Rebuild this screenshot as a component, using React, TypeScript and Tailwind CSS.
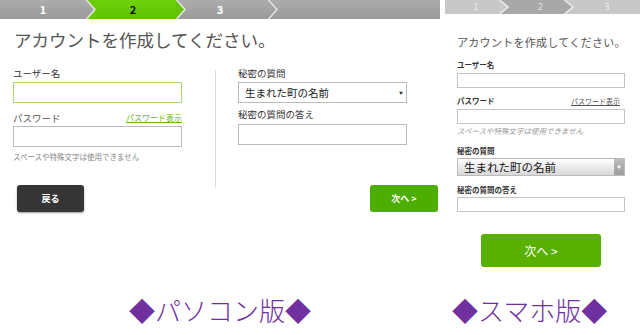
const jp = "font-['Noto_Sans_CJK_JP',sans-serif]";
const label = "font-['Liberation_Serif','Noto_Sans_CJK_JP',serif] font-light";

function Chevron({ fillLeft, fillRight, h, line }: { fillLeft?: string; fillRight?: string; h: number; line: string }) {
  const m = h / 2;
  return (
    <svg width="10" height={h} viewBox={`0 0 10 ${h}`} className="shrink-0 block">
      {fillLeft && <polygon points={`0,0 9,${m} 0,${h}`} fill={fillLeft} />}
      {fillRight && <polygon points={`0,0 10,0 10,${h} 0,${h} 9,${m}`} fill={fillRight} />}
      <polyline points={`0.5,0 9,${m} 0.5,${h}`} fill="none" stroke={line} strokeWidth="1.5" />
    </svg>
  );
}

function PcPanel() {
  return (
    <div className={`flex w-[440px] flex-col ${jp}`}>
      {/* steps */}
      <div className="flex h-[19px] bg-gradient-to-b from-[#acacac] to-[#9a9a9a] text-[11px] font-bold leading-[19px] text-white">
        <div className="flex w-[86px] justify-center">1</div>
        <Chevron h={19} fillRight="#66cc00" line="#e6e6e6" />
        <div className="flex w-[80px] justify-center bg-gradient-to-b from-[#6fd20a] to-[#5fc000] pr-[6px] text-[#111]">2</div>
        <Chevron h={19} fillLeft="#62c400" line="#e6e6e6" />
        <div className="flex w-[82px] justify-center pr-[14px]">3</div>
        <Chevron h={19} line="#e6e6e6" />
        <div className="flex-1" />
      </div>

      <h1 className="mt-[9px] pl-[14px] text-[17.5px] leading-[24px] text-[#555]">アカウントを作成してください。</h1>

      <div className="mt-[14px] flex items-start pl-[13px]">
        {/* left column */}
        <div className="flex w-[169px] flex-col">
          <div className="text-[9.5px] leading-[14px] text-[#333]">ユーザー名</div>
          <input readOnly className="mt-[2px] h-[21px] w-full border border-[#a8d872] bg-white outline-none" />
          <div className="mt-[8px] flex justify-between text-[9.5px] leading-[14px]">
            <span className="text-[#555]">パスワード</span>
            <span className="text-[8px] text-[#66bb00] underline">パスワード表示</span>
          </div>
          <input readOnly className="mt-[1px] h-[21px] w-full border border-[#bbb] bg-white outline-none" />
          <div className="mt-[4px] whitespace-nowrap text-[7.5px] leading-[11px] text-[#888]">スペースや特殊文字は使用できません</div>
          <button className="ml-[4px] mt-[23px] h-[27px] w-[67px] rounded-[3px] bg-[#353535] text-[9px] font-bold text-white shadow-[0_1px_2px_rgba(0,0,0,0.4)]">
            戻る
          </button>
        </div>

        <div className="ml-[33px] mt-[4px] h-[118px] w-px bg-[#dcdcdc]" />

        {/* right column */}
        <div className="ml-[22px] flex w-[200px] flex-col">
          <div className="text-[9.5px] leading-[14px] text-[#333]">秘密の質問</div>
          <div className="mt-[2px] flex h-[21px] w-[169px] items-center justify-between border border-[#bbb] bg-white pl-[6px] pr-[3px]">
            <span className="text-[10.5px] text-[#222]">生まれた町の名前</span>
            <span className="text-[4px] text-[#333]">▼</span>
          </div>
          <div className="mt-[4px] text-[9.5px] leading-[14px] text-[#333]">秘密の質問の答え</div>
          <input readOnly className="mt-[3px] h-[21px] w-[169px] border border-[#bbb] bg-white outline-none" />
          <button className="mt-[40px] h-[27px] w-[68px] self-end rounded-[3px] bg-[#4eae00] text-[9px] font-bold text-white">
            次へ &gt;
          </button>
        </div>
      </div>

      <div className={`mt-auto pb-[9px] text-center text-[26px] leading-[26px] text-[#7030a0] ${label}`}>◆パソコン版◆</div>
    </div>
  );
}

function SpPanel() {
  return (
    <div className={`ml-[5px] flex w-[195px] flex-col ${jp}`}>
      <div className="flex h-[14px] bg-[#c8c8c8] text-[9px] font-light leading-[14px] text-white">
        <div className="flex w-[54px] justify-center pl-[8px]">1</div>
        <Chevron h={14} fillRight="#a8a8a8" line="#ececec" />
        <div className="flex w-[55px] justify-center bg-[#a8a8a8] pl-[8px]">2</div>
        <Chevron h={14} fillLeft="#a8a8a8" line="#ececec" />
        <div className="flex flex-1 justify-center">3</div>
      </div>

      <div className="flex flex-col pl-[12px]">
        <h1 className="mt-[21px] text-[11px] tracking-[0.3px] leading-[15px] text-[#555]">アカウントを作成してください。</h1>

        <div className="mt-[10px] text-[7.5px] font-bold leading-[10px] text-[#333]">ユーザー名</div>
        <input readOnly className="mt-[3px] h-[15px] w-[168px] border border-[#c4c4c4] bg-white outline-none" />

        <div className="mt-[8px] flex w-[168px] justify-between pr-[5px] text-[7.5px] leading-[10px]">
          <span className="font-bold text-[#333]">パスワード</span>
          <span className="text-[7px] text-[#555] underline">パスワード表示</span>
        </div>
        <input readOnly className="mt-[3px] h-[15px] w-[168px] border border-[#c4c4c4] bg-white outline-none" />
        <div className="mt-[2px] whitespace-nowrap text-[7.5px] italic leading-[10px] text-[#999]">スペースや特殊文字は使用できません</div>

        <div className="mt-[10px] text-[7.5px] font-bold leading-[10px] text-[#333]">秘密の質問</div>
        <div className="mt-[2px] flex h-[18px] w-[168px] items-center border border-[#bbb] bg-gradient-to-b from-white to-[#d8d8d8]">
          <span className="flex-1 pl-[6px] text-[11.5px] leading-[16px] text-[#111]">生まれた町の名前</span>
          <span className="flex h-full w-[10px] items-center justify-center bg-gradient-to-b from-[#bdbdbd] to-[#9c9c9c] text-[4px] text-white">▼</span>
        </div>

        <div className="mt-[9px] text-[7.5px] font-bold leading-[10px] text-[#333]">秘密の質問の答え</div>
        <input readOnly className="mt-[2px] h-[15px] w-[168px] border border-[#c4c4c4] bg-white outline-none" />

        <button className="ml-[24px] mt-[22px] h-[33px] w-[120px] rounded-[3px] bg-[#5ab000] text-[12px] text-white">
          次へ &gt;
        </button>
      </div>

      <div className={`mt-auto pb-[9px] pl-[7px] text-[26px] leading-[26px] text-[#7030a0] ${label}`}>◆スマホ版◆</div>
    </div>
  );
}

export default function App() {
  return (
    <div className="flex h-[335px] w-[640px] overflow-hidden bg-white">
      <PcPanel />
      <SpPanel />
    </div>
  );
}
